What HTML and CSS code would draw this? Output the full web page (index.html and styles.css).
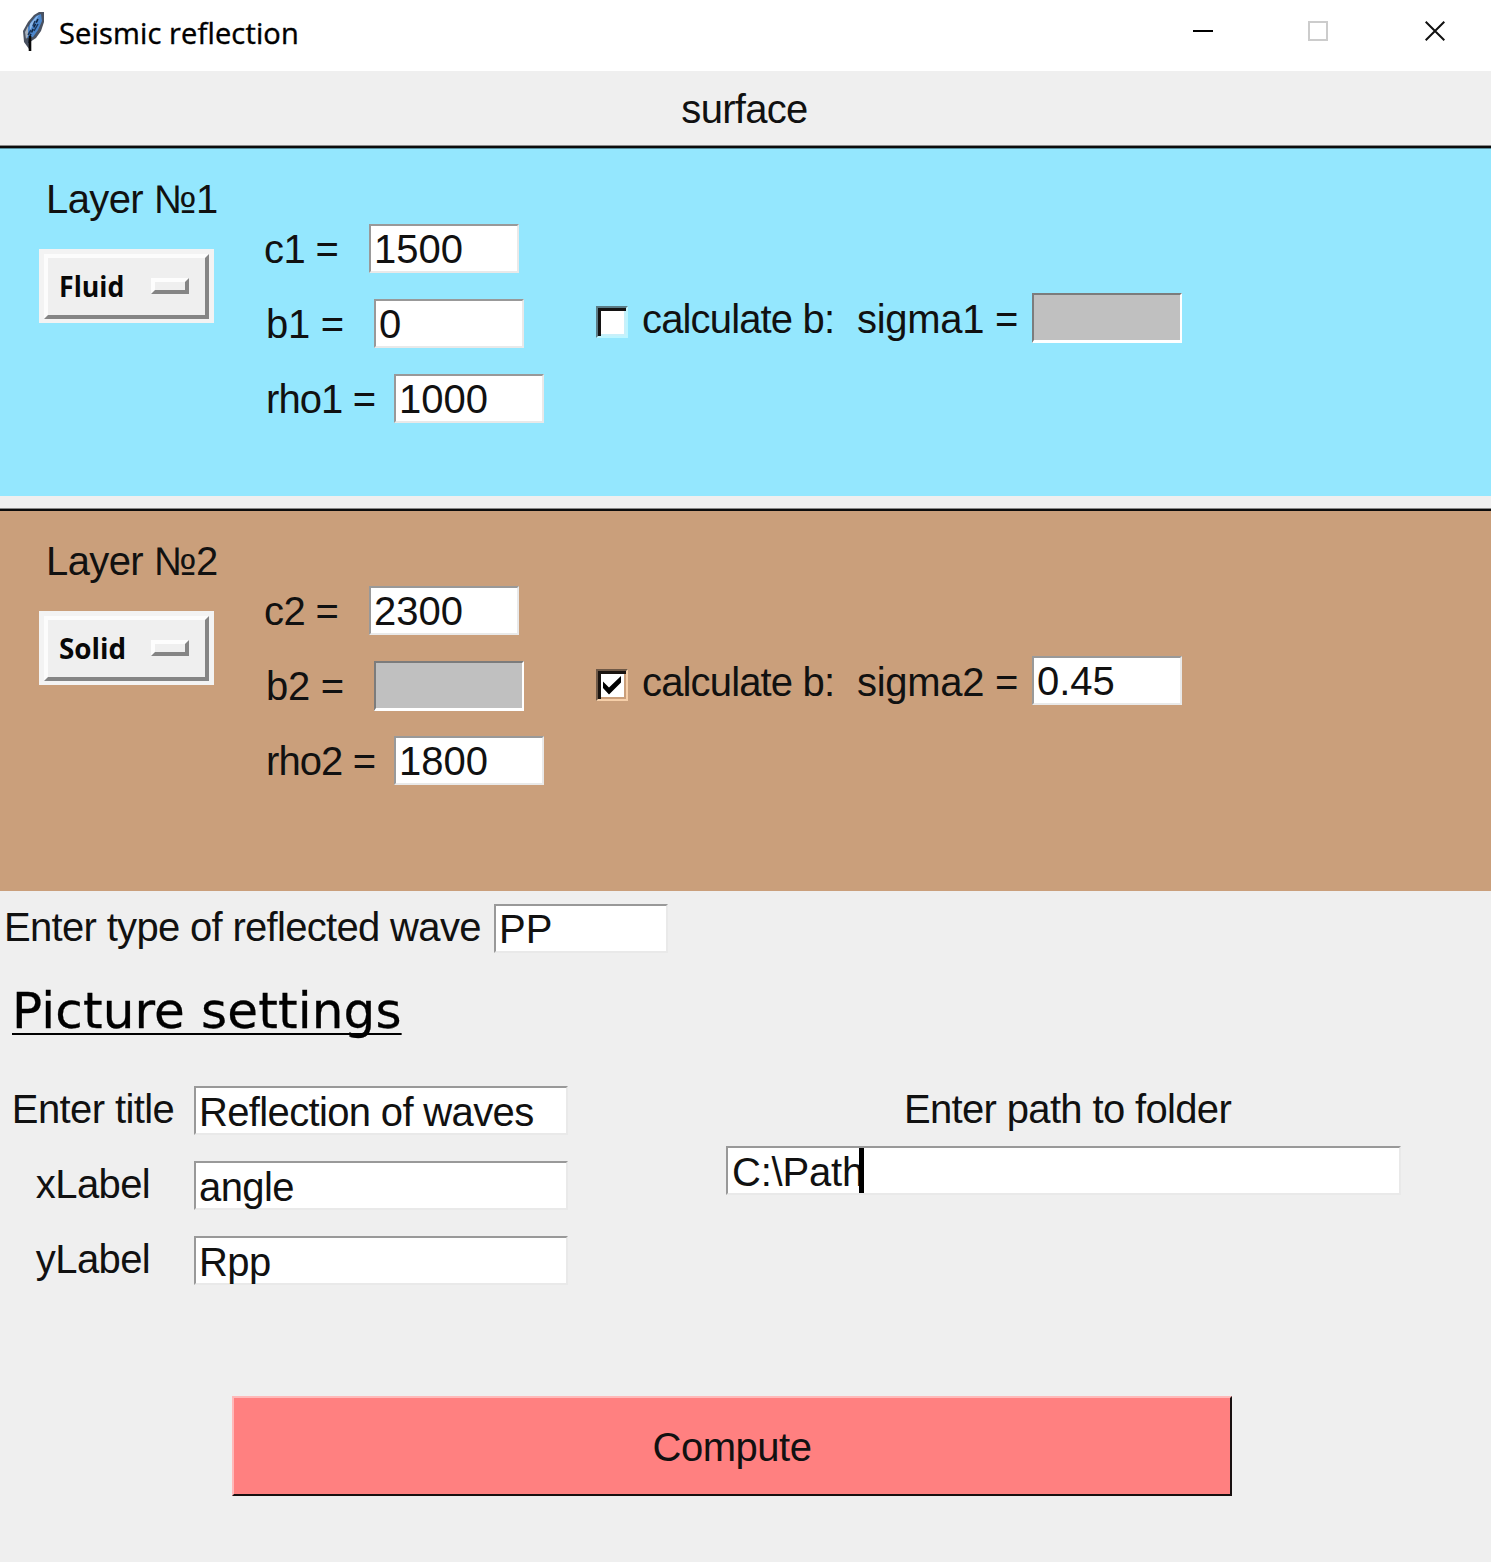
FILE: index.html
```html
<!DOCTYPE html>
<html lang="en">
<head>
<meta charset="utf-8">
<title>Seismic reflection</title>
<link rel="stylesheet" href="styles.css">
</head>
<body>
<header class="titlebar">
  <svg class="feather" width="26" height="42" viewBox="0 0 26 42">
    <path d="M8 38 L3 31 L2 20 L7 11 L13 4 L18 1 L23 1 L23 11 L20 20 L15 27 L9 31 Z" fill="#4a5261"/>
    <path d="M6 27 L5 20 L10 11 L15 5 L20 3 L21 10 L17 19 L12 26 Z" fill="#4c87cc"/>
    <path d="M5 28 L4 21 L7 15 L7 25 Z" fill="#a9b3bf"/>
    <path d="M9 13 L15 6 L18 4 L12 13 L9 20 Z" fill="#8fb9e8"/>
    <path d="M17 8 L13 16 L9 25 L8 32" fill="none" stroke="#10243f" stroke-width="1.6" stroke-dasharray="4 1.5"/>
    <path d="M14 10 L12 15 M17 13 L13 20 M10 19 L7 24" fill="none" stroke="#1c375c" stroke-width="1.5"/>
    <path d="M9 25 L9 40" stroke="#080808" stroke-width="2.6"/>
  </svg>
  <h1 class="caption">Seismic reflection</h1>
  <div class="controls">
    <svg width="20" height="20" viewBox="0 0 20 20"><path d="M0 10H20" stroke="#000" stroke-width="2"/></svg>
    <svg class="maximize" width="20" height="20" viewBox="0 0 20 20"><rect x="1" y="1" width="18" height="18" fill="none" stroke="#ccc" stroke-width="2"/></svg>
    <svg width="20" height="20" viewBox="0 0 20 20"><path d="M.7 .7L19.3 19.3M19.3 .7L.7 19.3" stroke="#111" stroke-width="2"/></svg>
  </div>
</header>

<div class="surface">surface</div>

<section class="layer fluid">
  <div class="kind">
    <div class="name">Layer №1</div>
    <div class="menu"><div class="menu-face"><span class="menu-text word-fluid">Fluid</span><span class="indicator"></span></div></div>
  </div>
  <div class="params">
    <div class="row"><span class="lbl c">c1 =</span><div class="entry">1500</div></div>
    <div class="row"><span class="lbl b">b1 =</span><div class="entry">0</div></div>
    <div class="row"><span class="lbl rho">rho1 =</span><div class="entry">1000</div></div>
  </div>
  <div class="calc">
    <span class="check"></span>
    <span class="calc-text">calculate b:</span>
    <span class="sigma">sigma1 =</span>
    <div class="entry off"></div>
  </div>
</section>

<section class="layer solid">
  <div class="kind">
    <div class="name">Layer №2</div>
    <div class="menu"><div class="menu-face"><span class="menu-text word-solid">Solid</span><span class="indicator"></span></div></div>
  </div>
  <div class="params">
    <div class="row"><span class="lbl c">c2 =</span><div class="entry">2300</div></div>
    <div class="row"><span class="lbl b">b2 =</span><div class="entry off"></div></div>
    <div class="row"><span class="lbl rho">rho2 =</span><div class="entry">1800</div></div>
  </div>
  <div class="calc">
    <span class="check"><svg width="22" height="20" viewBox="0 0 22 20"><path d="M2 6.5L8 12.5L20 1V7.5L8 19.5L2 13Z" fill="#000"/></svg></span>
    <span class="calc-text">calculate b:</span>
    <span class="sigma">sigma2 =</span>
    <div class="entry">0.45</div>
  </div>
</section>

<div class="wave"><span class="wave-label">Enter type of reflected wave</span><div class="entry wave-entry">PP</div></div>

<h2 class="settings-title">Picture settings</h2>

<div class="settings">
  <div class="labels">
    <div class="row"><span class="key">Enter title</span><div class="entry low wide squeeze">Reflection of waves</div></div>
    <div class="row"><span class="key">xLabel</span><div class="entry low wide tight">angle</div></div>
    <div class="row"><span class="key">yLabel</span><div class="entry low wide tight">Rpp</div></div>
  </div>
  <div class="path">
    <div class="path-label">Enter path to folder</div>
    <div class="entry low path-entry">C:\Path<span class="caret"></span></div>
  </div>
</div>

<div class="compute">Compute</div>
</body>
</html>
```
FILE: styles.css
```css
* { box-sizing: border-box; }
body {
  margin: 0;
  height: 1562px;
  overflow: hidden;
  background: #efefef;
  color: #111;
  font: 40px/46px "Liberation Sans", Arial, sans-serif;
  white-space: nowrap;
}
.titlebar {
  display: flex;
  height: 71px;
  padding: 11px 46px 0 21px;
  background: #fff;
}
.feather { flex: none; }
.caption {
  margin: 2px 0 0 12px;
  color: #000;
  font: 500 29px/40px "Open Sans", "Segoe UI", sans-serif;
  letter-spacing: .15px;
  -webkit-text-stroke: .4px #000;
}
.controls { display: flex; gap: 96px; margin: 10px 0 0 auto; }
.maximize { margin: 0 1px 0 -1px; }

.surface {
  height: 75px;
  padding: 15px 2px 0 0;
  border-bottom: 1px solid #888;
  text-align: center;
  letter-spacing: -.7px;
}
.layer { display: flex; border-top: 2px solid #0c0c0c; }
.fluid { height: 350px; background: #94e7fe; box-shadow: inset 0 1px #58909f; }
.solid {
  height: 382px;
  margin-top: 13px;
  background: #ca9f7b;
  box-shadow: 0 -1px #888;
}
.kind { width: 263px; padding: 28px 0 0 39px; }
.name { margin-left: 5px; padding-left: 2px; letter-spacing: -.6px; }
.menu { width: 175px; height: 74px; margin-top: 27px; padding: 5px; background: #f3f3f3; }
.menu-face {
  display: flex;
  align-items: center;
  height: 65px;
  padding: 0 15px 2px 11px;
  background: #efefef;
  border: 4px solid;
  border-color: #fcfcfc #858585 #858585 #fcfcfc;
}
.menu-text {
  width: 92px;
  color: #080808;
  font: bold 29px/40px "Open Sans", "Segoe UI", sans-serif;
  transform-origin: left;
}
.word-fluid { transform: scaleX(.92); }
.word-solid { transform: scaleX(.96); }
.indicator {
  flex: none;
  width: 38px;
  height: 16px;
  border: 4px solid;
  border-color: #fdfdfd #858585 #858585 #fdfdfd;
  background: #efefef;
}
.params { display: flex; flex-direction: column; gap: 26px; width: 333px; padding-top: 76px; }
.solid .kind { padding-top: 27px; }
.solid .params { padding-top: 75px; }
.row { display: flex; height: 49px; }
.lbl { margin-top: 2px; letter-spacing: -.6px; }
.c { width: 106px; padding-left: 1px; }
.b { width: 111px; padding-left: 3px; letter-spacing: -.3px; }
.rho { width: 131px; padding-left: 3px; letter-spacing: -.9px; }
.entry {
  width: 150px;
  height: 49px;
  padding-left: 3px;
  border: 2px solid;
  border-color: #999 #e9e9e9 #e9e9e9 #999;
  background: #fff;
}
.off { background: #c0c0c0; border-color: #7c7c7c #fff #fff #7c7c7c; border-bottom-width: 3px; height: 50px; }
.low { line-height: 48px; }
.tight { letter-spacing: -.6px; }
.squeeze { letter-spacing: -.65px; }

.calc { display: flex; padding-top: 145px; }
.check {
  width: 32px;
  height: 32px;
  margin-top: 13px;
  border: 2px solid;
  border-color: #5a7c86 #bdf5ff #bdf5ff #5a7c86;
  background: #fff;
  box-shadow: inset 3px 3px #141414, inset -2px -2px #c8f0fa;
}
.solid .check {
  border-color: #6f5947 #f6cfa9 #f6cfa9 #6f5947;
  box-shadow: inset 3px 3px #1a1410, inset -2px -2px #ca9f7b;
}
.check svg { display: block; margin: 4px 0 0 3px; }
.calc-text { width: 215px; margin: 3px 0 0 13px; padding-left: 1px; letter-spacing: -.85px; }
.sigma { width: 176px; margin-top: 3px; padding-left: 1px; letter-spacing: -.3px; }

.wave { display: flex; height: 62px; padding: 13px 0 0 3px; }
.wave-label { width: 491px; padding-left: 1px; letter-spacing: -.68px; }
.wave-entry { width: 174px; }
.settings-title {
  margin: 28px 0 0 12px;
  color: #000;
  font: 50px/60px "DejaVu Sans", Verdana, sans-serif;
  letter-spacing: .15px;
  text-decoration: underline 2px;
  text-decoration-skip-ink: none;
  text-underline-offset: 5px;
  -webkit-text-stroke: .3px #000;
}
.settings { display: flex; padding-top: 45px; }
.labels { display: flex; flex-direction: column; gap: 26px; width: 726px; }
.key { width: 186px; margin: 0 8px 0 0; text-align: center; letter-spacing: -.6px; }
.wide { width: 374px; }
.path-label { text-align: center; letter-spacing: -.65px; margin-left: 8px; }
.path-entry { position: relative; width: 675px; margin-top: 14px; padding-left: 4px; letter-spacing: -.2px; }
.caret { position: absolute; left: 131px; top: 0; width: 5px; height: 45px; background: #000; }
.compute {
  width: 1000px;
  height: 100px;
  margin: 111px 0 0 232px;
  border: 2px solid;
  border-color: #ffb9b9 #181010 #181010 #ffb9b9;
  background: #ff8080;
  line-height: 98px;
  text-align: center;
  letter-spacing: -.5px;
}
```
